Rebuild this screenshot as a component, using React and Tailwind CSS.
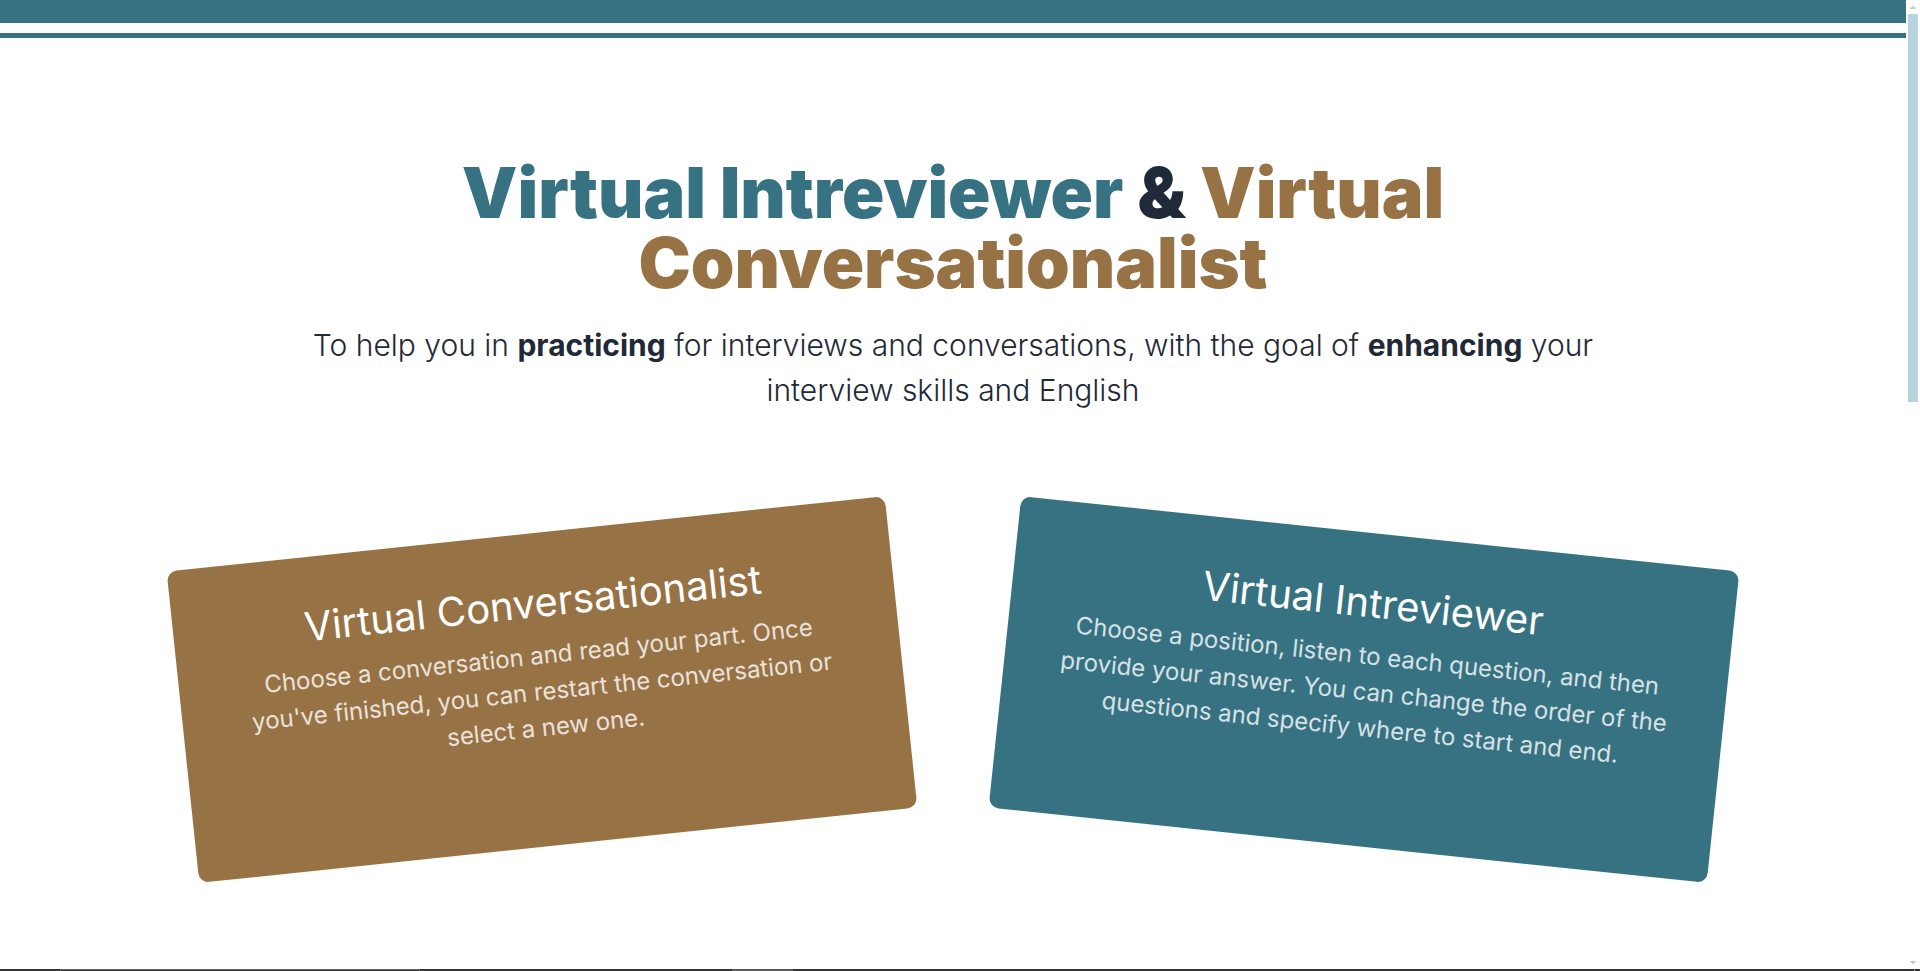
const cards = [
  {
    title: "Virtual Conversationalist",
    text: "Choose a conversation and read your part. Once you've finished, you can restart the conversation or select a new one.",
    href: "#conversationalist",
    look: "bg-[#977245] -rotate-6",
  },
  {
    title: "Virtual Intreviewer",
    text: "Choose a position, listen to each question, and then provide your answer. You can change the order of the questions and specify where to start and end.",
    href: "#intreviewer",
    look: "bg-[#367281] rotate-6",
  },
];

function Header() {
  return (
    <header>
      <div className="h-[23px] bg-[#367281]" />
      <div className="mt-[10px] h-[5px] bg-[#367281]" />
    </header>
  );
}

function Hero() {
  return (
    <section className="mx-auto max-w-[1320px] text-center">
      <h1 className="mx-auto max-w-[1100px] text-[70px] leading-none font-black">
        <span className="text-[#367281]">Virtual Intreviewer</span> &amp;{" "}
        <span className="text-[#977245]">Virtual Conversationalist</span>
      </h1>
      <p className="mt-[25px] text-[30px] leading-[45px] font-light">
        To help you in <strong className="font-bold">practicing</strong> for interviews and
        conversations, with the goal of <strong className="font-bold">enhancing</strong> your
        interview skills and English
      </p>
    </section>
  );
}

function Card({ title, text, href, look }) {
  return (
    <a
      href={href}
      className={`flex min-h-[313px] flex-1 flex-col rounded-[10px] px-14 pt-10 text-center text-white ${look}`}
    >
      <h2 className="text-[40px] leading-[60px]">{title}</h2>
      <p className="mt-[5px] text-2xl leading-9 opacity-80">{text}</p>
    </a>
  );
}

function ScrollBar() {
  return (
    <div className="flex w-[14px] shrink-0 flex-col items-center justify-between bg-white pt-[6px] pb-[5px]" aria-hidden="true">
      <div className="flex flex-col items-center gap-[5px]">
        <svg className="h-[3px] w-[6px]" viewBox="0 0 6 3" shapeRendering="crispEdges" fill="#b5d4dd">
          <path d="M2 0h2v1h1v1h1v1H0V2h1V1h1z" />
        </svg>
        <div className="h-[40vh] w-[10px] bg-[#b5d4dd]" />
      </div>
      <svg className="h-[3px] w-[6px]" viewBox="0 0 6 3" shapeRendering="crispEdges" fill="#b5d4dd">
        <path d="M0 0h6v1H5v1H4v1H2V2H1V1H0z" />
      </svg>
    </div>
  );
}

function TaskBar() {
  return (
    <footer className="flex h-[2px] bg-[#333333]">
      <div className="ml-[60px] w-[360px] border-x border-t border-[#666666]" />
      <div className="ml-[312px] w-[61px] bg-[#5a5a5a]" />
      <div className="mr-[5px] ml-auto w-px bg-[#8a8a8a]" />
    </footer>
  );
}

export default function App() {
  return (
    <div className="flex h-screen flex-col overflow-hidden bg-white font-['Inter',sans-serif] text-[#1f2937]">
      <div className="flex min-h-0 flex-1">
        <div className="min-w-0 flex-1 overflow-hidden">
          <Header />
          <main className="px-[181px] pt-[120px]">
            <Hero />
            <div className="mt-[120px] flex gap-[100px]">
              {cards.map((card) => (
                <Card key={card.title} {...card} />
              ))}
            </div>
          </main>
        </div>
        <ScrollBar />
      </div>
      <TaskBar />
    </div>
  );
}
